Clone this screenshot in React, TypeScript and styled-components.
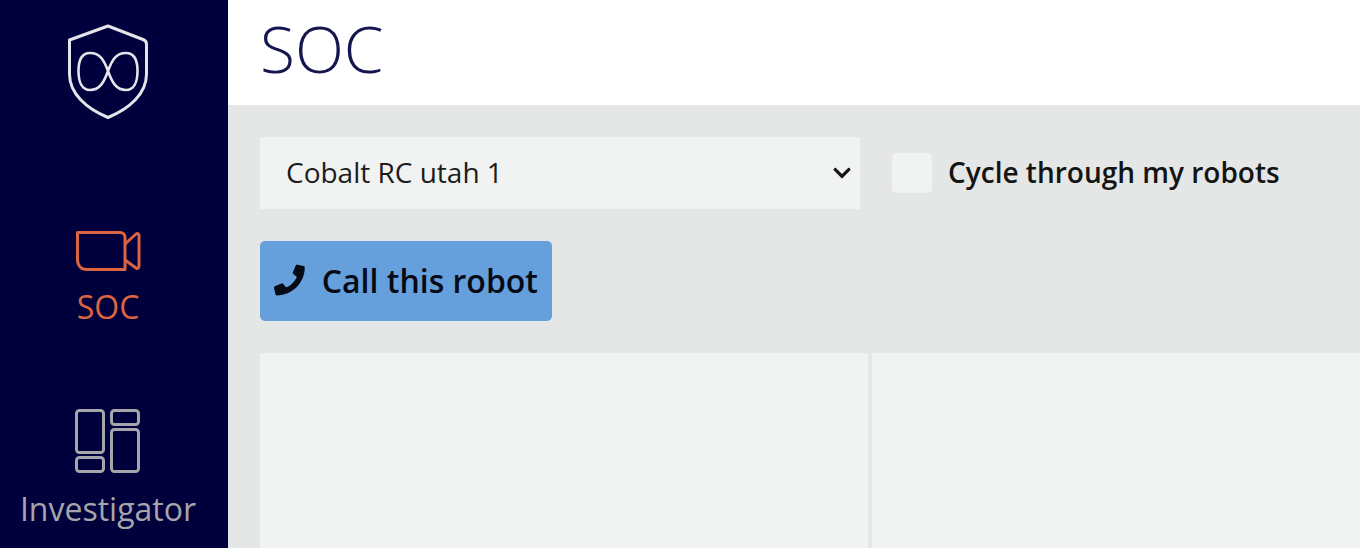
import React from 'react'
import styled, { createGlobalStyle } from 'styled-components'
import { FaPhone, FaChevronDown } from 'react-icons/fa'

const GlobalStyle = createGlobalStyle`
  html, body {
    margin: 0;
    padding: 0;
    height: 100%;
    overflow: hidden;
  }
  body {
    font-family: "Open Sans", "Noto Sans", sans-serif;
  }
`

const ShieldLogo = () => (
  <svg width="82" height="96" viewBox="0 0 82 96" fill="none" stroke="#e4e4ea" strokeWidth="3" strokeLinejoin="round">
    <path d="M41 2 L 76 15.5 C 78.5 16.5 79.5 17.5 79.5 20 L 79.5 50 C 79.5 70 62 85 41 93.5 C 20 85 2.5 70 2.5 50 L 2.5 16 L 41 2 Z" />
    <path
      strokeWidth="2.6"
      d="M41 47 C 37 58 33 66 23 66 C 15 66 11.5 58 11.5 47 C 11.5 36 15 29 23 29 C 33 29 37 36 41 47 C 45 58 49 66 59 66 C 67 66 70.5 58 70.5 47 C 70.5 36 67 29 59 29 C 49 29 45 36 41 47 Z"
    />
  </svg>
)

const VideoIcon = () => (
  <svg width="66" height="42" viewBox="0 0 66 42" fill="none" stroke="currentColor" strokeWidth="3" strokeLinejoin="round">
    <path d="M2.5 2.5 H 45 C 48 2.5 50 4.5 50 7.5 V 39.5 H 12 C 6 39.5 2.5 35.5 2.5 29.5 Z" />
    <path d="M50 14 L 61 4 C 63 3 64 4 64 6 V 36 C 64 38 62 39 61 38 L 50 30" />
  </svg>
)

const PanelsIcon = () => (
  <svg width="66" height="66" viewBox="0 0 66 66" fill="none" stroke="currentColor" strokeWidth="3">
    <rect x="1.5" y="2.5" width="27" height="42" rx="3" />
    <rect x="1.5" y="49.5" width="27" height="14" rx="3" />
    <rect x="36.5" y="2.5" width="27" height="14" rx="3" />
    <rect x="36.5" y="21.5" width="27" height="42" rx="3" />
  </svg>
)

const App = () => {
  return (
    <Page>
      <GlobalStyle />
      <Sidebar>
        <LogoSlot>
          <ShieldLogo />
        </LogoSlot>
        <NavItem $active>
          <VideoIcon />
          <NavLabel>SOC</NavLabel>
        </NavItem>
        <NavItem>
          <PanelsIcon />
          <NavLabel>Investigator</NavLabel>
        </NavItem>
      </Sidebar>
      <Main>
        <Header>
          <Title>SOC</Title>
        </Header>
        <Content>
          <ControlRow>
            <SelectWrap>
              <RobotSelect defaultValue="Cobalt RC utah 1">
                <option>Cobalt RC utah 1</option>
              </RobotSelect>
              <SelectChevron>
                <FaChevronDown size={20} />
              </SelectChevron>
            </SelectWrap>
            <CycleLabel>
              <CycleBox />
              <CycleText>Cycle through my robots</CycleText>
            </CycleLabel>
          </ControlRow>
          <CallButton>
            <FaPhone size={32} />
            Call this robot
          </CallButton>
          <Feeds>
            <Feed />
            <Feed />
          </Feeds>
        </Content>
      </Main>
    </Page>
  )
}

export default App

const Page = styled.div`
  display: flex;
  width: 1360px;
  height: 548px;
  overflow: hidden;
`

const Sidebar = styled.nav`
  flex: 0 0 228px;
  box-sizing: border-box;
  display: flex;
  flex-direction: column;
  align-items: center;
  padding-right: 12px;
  background: #00003c;
`

const LogoSlot = styled.div`
  flex-shrink: 0;
  height: 230px;
  padding-top: 24px;
  box-sizing: border-box;
`

const NavItem = styled.a<{ $active?: boolean }>`
  flex-shrink: 0;
  display: flex;
  flex-direction: column;
  align-items: center;
  height: 178px;
  color: ${props => props.$active ? '#dc6441' : '#a5a5ab'};
`

const NavLabel = styled.span`
  margin-top: 13px;
  font-size: 32px;
  line-height: 44px;
`

const Main = styled.main`
  flex: 1;
  display: flex;
  flex-direction: column;
  min-width: 0;
`

const Header = styled.header`
  flex: 0 0 105px;
  padding-left: 32px;
  background: #fff;
`

const Title = styled.h1`
  margin: 0;
  font-size: 64px;
  font-weight: 300;
  line-height: 98px;
  color: #15154f;
`

const Content = styled.div`
  flex: 1;
  display: flex;
  flex-direction: column;
  align-items: flex-start;
  padding: 32px 0 0 32px;
  background: #e5e7e6;
`

const ControlRow = styled.div`
  display: flex;
  align-items: center;
  gap: 32px;
`

const SelectWrap = styled.div`
  position: relative;
  width: 600px;
  height: 72px;
`

const RobotSelect = styled.select`
  appearance: none;
  box-sizing: border-box;
  width: 100%;
  height: 100%;
  padding: 0 26px 2px;
  border: 0;
  background: #f1f3f2;
  font-family: inherit;
  font-size: 28px;
  color: #1c1c1c;
`

const SelectChevron = styled.span`
  position: absolute;
  top: 26px;
  right: 8px;
  display: flex;
  color: #141414;
  pointer-events: none;
`

const CycleLabel = styled.label`
  display: flex;
  align-items: center;
  gap: 16px;
  font-size: 28px;
  font-weight: 600;
  color: #141414;
`

const CycleBox = styled.span`
  width: 40px;
  height: 40px;
  border-radius: 5px;
  background: #f1f3f2;
`

const CycleText = styled.span`
  padding-bottom: 2px;
`

const CallButton = styled.button`
  display: flex;
  align-items: center;
  gap: 17px;
  width: 292px;
  height: 80px;
  margin-top: 32px;
  padding: 0 14px 2px;
  border: 0;
  border-radius: 5px;
  background: #659fdc;
  font-family: inherit;
  font-size: 32px;
  font-weight: 600;
  white-space: nowrap;
  color: #050a14;
`

const Feeds = styled.div`
  display: flex;
  gap: 4px;
  align-self: stretch;
  flex: 1;
  margin-top: 32px;
`

const Feed = styled.div`
  flex: 0 0 608px;
  background: #f1f3f2;
`
